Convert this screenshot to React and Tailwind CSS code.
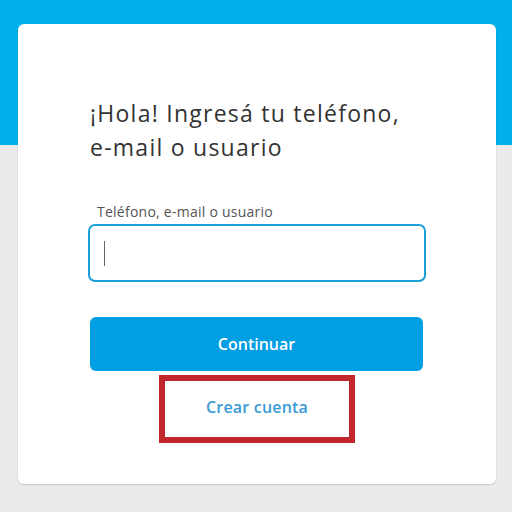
const App = () => {
  return (
    <div className="min-h-screen bg-[linear-gradient(to_bottom,#00b1ea_145px,#ebebeb_145px)] pt-[24px] font-['Open_Sans','Noto_Sans',sans-serif]">
      <div className="mx-[18px] h-[460px] w-[478px] rounded-[6px] bg-white shadow-[0_1px_2px_rgba(0,0,0,0.15)]">
        <div className="ml-[70px] w-[338px] pt-[72px]">
          <h1 className="ml-[2px] text-[23px] leading-[34px] font-normal tracking-[1.25px] text-[#333]">
            ¡Hola! Ingresá tu teléfono,
            <br />
            e-mail o usuario
          </h1>

          <label className="mt-[38px] ml-[9px] block text-[14px] leading-[20px] tracking-[0.25px] text-[#555]">
            Teléfono, e-mail o usuario
          </label>
          <div className="mt-[2px] flex h-[58px] items-center rounded-[7px] border-2 border-[#1a9fd9] pl-[14px]">
            <span className="h-[25px] w-px bg-[#666]" />
          </div>

          <button
            type="button"
            className="mt-[35px] ml-[2px] h-[54px] w-[333px] rounded-[6px] bg-[#009ee3] text-[16px] font-semibold text-white"
          >
            Continuar
          </button>

          <div className="mx-auto mt-[4px] flex h-[68px] w-[196px] items-center justify-center border-[6px] border-[#c1272d] pb-[4px]">
            <span className="text-[16px] font-semibold tracking-[0.2px] text-[#3a9ad6]">Crear cuenta</span>
          </div>
        </div>
      </div>
    </div>
  );
};

export default App;
